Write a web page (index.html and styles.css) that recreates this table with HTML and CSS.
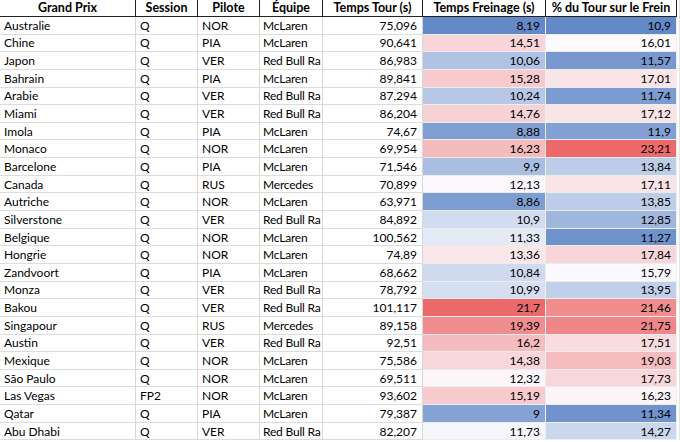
FILE: index.html
```html
<!DOCTYPE html>
<html lang="fr">
<head>
<meta charset="utf-8">
<title>Freinage</title>
<link rel="stylesheet" href="styles.css">
</head>
<body>
<div class="sheet">
  <div class="row head">
    <div class="c">Grand Prix</div><div class="c">Session</div><div class="c">Pilote</div><div class="c">Équipe</div><div class="c">Temps Tour (s)</div><div class="c">Temps Freinage (s)</div><div class="c">% du Tour sur le Frein</div>
  </div>
  <div class="row"><div class="c">Australie</div><div class="c">Q</div><div class="c">NOR</div><div class="c t">McLaren</div><div class="c n">75,096</div><div class="c n f">8,19</div><div class="c n p">10,9</div></div>
  <div class="row"><div class="c">Chine</div><div class="c">Q</div><div class="c">PIA</div><div class="c t">McLaren</div><div class="c n">90,641</div><div class="c n f">14,51</div><div class="c n p">16,01</div></div>
  <div class="row"><div class="c">Japon</div><div class="c">Q</div><div class="c">VER</div><div class="c t">Red Bull Ra</div><div class="c n">86,983</div><div class="c n f">10,06</div><div class="c n p">11,57</div></div>
  <div class="row"><div class="c">Bahrain</div><div class="c">Q</div><div class="c">PIA</div><div class="c t">McLaren</div><div class="c n">89,841</div><div class="c n f">15,28</div><div class="c n p">17,01</div></div>
  <div class="row"><div class="c">Arabie</div><div class="c">Q</div><div class="c">VER</div><div class="c t">Red Bull Ra</div><div class="c n">87,294</div><div class="c n f">10,24</div><div class="c n p">11,74</div></div>
  <div class="row"><div class="c">Miami</div><div class="c">Q</div><div class="c">VER</div><div class="c t">Red Bull Ra</div><div class="c n">86,204</div><div class="c n f">14,76</div><div class="c n p">17,12</div></div>
  <div class="row"><div class="c">Imola</div><div class="c">Q</div><div class="c">PIA</div><div class="c t">McLaren</div><div class="c n">74,67</div><div class="c n f">8,88</div><div class="c n p">11,9</div></div>
  <div class="row"><div class="c">Monaco</div><div class="c">Q</div><div class="c">NOR</div><div class="c t">McLaren</div><div class="c n">69,954</div><div class="c n f">16,23</div><div class="c n p">23,21</div></div>
  <div class="row"><div class="c">Barcelone</div><div class="c">Q</div><div class="c">PIA</div><div class="c t">McLaren</div><div class="c n">71,546</div><div class="c n f">9,9</div><div class="c n p">13,84</div></div>
  <div class="row"><div class="c">Canada</div><div class="c">Q</div><div class="c">RUS</div><div class="c t">Mercedes</div><div class="c n">70,899</div><div class="c n f">12,13</div><div class="c n p">17,11</div></div>
  <div class="row"><div class="c">Autriche</div><div class="c">Q</div><div class="c">NOR</div><div class="c t">McLaren</div><div class="c n">63,971</div><div class="c n f">8,86</div><div class="c n p">13,85</div></div>
  <div class="row"><div class="c">Silverstone</div><div class="c">Q</div><div class="c">VER</div><div class="c t">Red Bull Ra</div><div class="c n">84,892</div><div class="c n f">10,9</div><div class="c n p">12,85</div></div>
  <div class="row"><div class="c">Belgique</div><div class="c">Q</div><div class="c">NOR</div><div class="c t">McLaren</div><div class="c n">100,562</div><div class="c n f">11,33</div><div class="c n p">11,27</div></div>
  <div class="row"><div class="c">Hongrie</div><div class="c">Q</div><div class="c">NOR</div><div class="c t">McLaren</div><div class="c n">74,89</div><div class="c n f">13,36</div><div class="c n p">17,84</div></div>
  <div class="row"><div class="c">Zandvoort</div><div class="c">Q</div><div class="c">PIA</div><div class="c t">McLaren</div><div class="c n">68,662</div><div class="c n f">10,84</div><div class="c n p">15,79</div></div>
  <div class="row"><div class="c">Monza</div><div class="c">Q</div><div class="c">VER</div><div class="c t">Red Bull Ra</div><div class="c n">78,792</div><div class="c n f">10,99</div><div class="c n p">13,95</div></div>
  <div class="row"><div class="c">Bakou</div><div class="c">Q</div><div class="c">VER</div><div class="c t">Red Bull Ra</div><div class="c n">101,117</div><div class="c n f">21,7</div><div class="c n p">21,46</div></div>
  <div class="row"><div class="c">Singapour</div><div class="c">Q</div><div class="c">RUS</div><div class="c t">Mercedes</div><div class="c n">89,158</div><div class="c n f">19,39</div><div class="c n p">21,75</div></div>
  <div class="row"><div class="c">Austin</div><div class="c">Q</div><div class="c">VER</div><div class="c t">Red Bull Ra</div><div class="c n">92,51</div><div class="c n f">16,2</div><div class="c n p">17,51</div></div>
  <div class="row"><div class="c">Mexique</div><div class="c">Q</div><div class="c">NOR</div><div class="c t">McLaren</div><div class="c n">75,586</div><div class="c n f">14,38</div><div class="c n p">19,03</div></div>
  <div class="row"><div class="c">São Paulo</div><div class="c">Q</div><div class="c">NOR</div><div class="c t">McLaren</div><div class="c n">69,511</div><div class="c n f">12,32</div><div class="c n p">17,73</div></div>
  <div class="row"><div class="c">Las Vegas</div><div class="c">FP2</div><div class="c">NOR</div><div class="c t">McLaren</div><div class="c n">93,602</div><div class="c n f">15,19</div><div class="c n p">16,23</div></div>
  <div class="row"><div class="c">Qatar</div><div class="c">Q</div><div class="c">PIA</div><div class="c t">McLaren</div><div class="c n">79,387</div><div class="c n f">9</div><div class="c n p">11,34</div></div>
  <div class="row"><div class="c">Abu Dhabi</div><div class="c">Q</div><div class="c">VER</div><div class="c t">Red Bull Ra</div><div class="c n">82,207</div><div class="c n f">11,73</div><div class="c n p">14,27</div></div>
</div>
<script src="script.js"></script>
</body>
</html>
```

FILE: styles.css
```css
html, body {
  margin: 0;
  padding: 0;
  background: #ffffff;
}
body {
  font-family: Lato, "Liberation Sans", sans-serif;
  font-size: 12px;
  color: #000;
  overflow: hidden;
}
.sheet {
  width: 680px;
  border-right: 1px solid #e2e2e2;
  box-sizing: border-box;
}
.row {
  display: grid;
  grid-template-columns: 136px 62px 62px 63px 100px 123px 131px;
  height: 17.65px;
}
.c {
  box-sizing: border-box;
  border-right: 1px solid #d8d8d8;
  border-bottom: 1px solid #dcdcdc;
  padding: 1px 4px 0 4px;
  display: flex;
  align-items: center;
  white-space: nowrap;
  overflow: hidden;
  line-height: 1;
}
.t {
  padding-left: 3px;
  padding-right: 0;
  letter-spacing: -0.2px;
}
.n {
  justify-content: flex-end;
  padding-right: 5px;
}
.f, .p {
  border-bottom-color: #ececec;
  border-right-color: #eeeeee;
}
.head {
  height: 17px;
}
.head .c {
  font-weight: 700;
  font-size: 12.5px;
  justify-content: center;
  border-right: 1px solid #222;
  border-bottom: 1px solid #222;
  padding: 0 2px;
}
```

FILE: script.js
```js
(function () {
  var blue = [99, 137, 200];
  var white = [252, 252, 255];
  var red = [236, 106, 108];
  function num(el) { return parseFloat(el.textContent.replace(',', '.')); }
  function mix(a, b, t) {
    return 'rgb(' + a.map(function (x, i) { return Math.round(x + (b[i] - x) * t); }).join(',') + ')';
  }
  function apply(sel) {
    var cells = Array.prototype.slice.call(document.querySelectorAll(sel));
    var vals = cells.map(num);
    var s = vals.slice().sort(function (a, b) { return a - b; });
    var min = s[0], max = s[s.length - 1];
    var m = s.length / 2;
    var mid = s.length % 2 ? s[Math.floor(m)] : (s[m - 1] + s[m]) / 2;
    cells.forEach(function (c, i) {
      var v = vals[i];
      var col = v <= mid ? mix(blue, white, (v - min) / (mid - min)) : mix(white, red, (v - mid) / (max - mid));
      c.style.backgroundColor = col;
    });
  }
  apply('.f');
  apply('.p');
})();
```
